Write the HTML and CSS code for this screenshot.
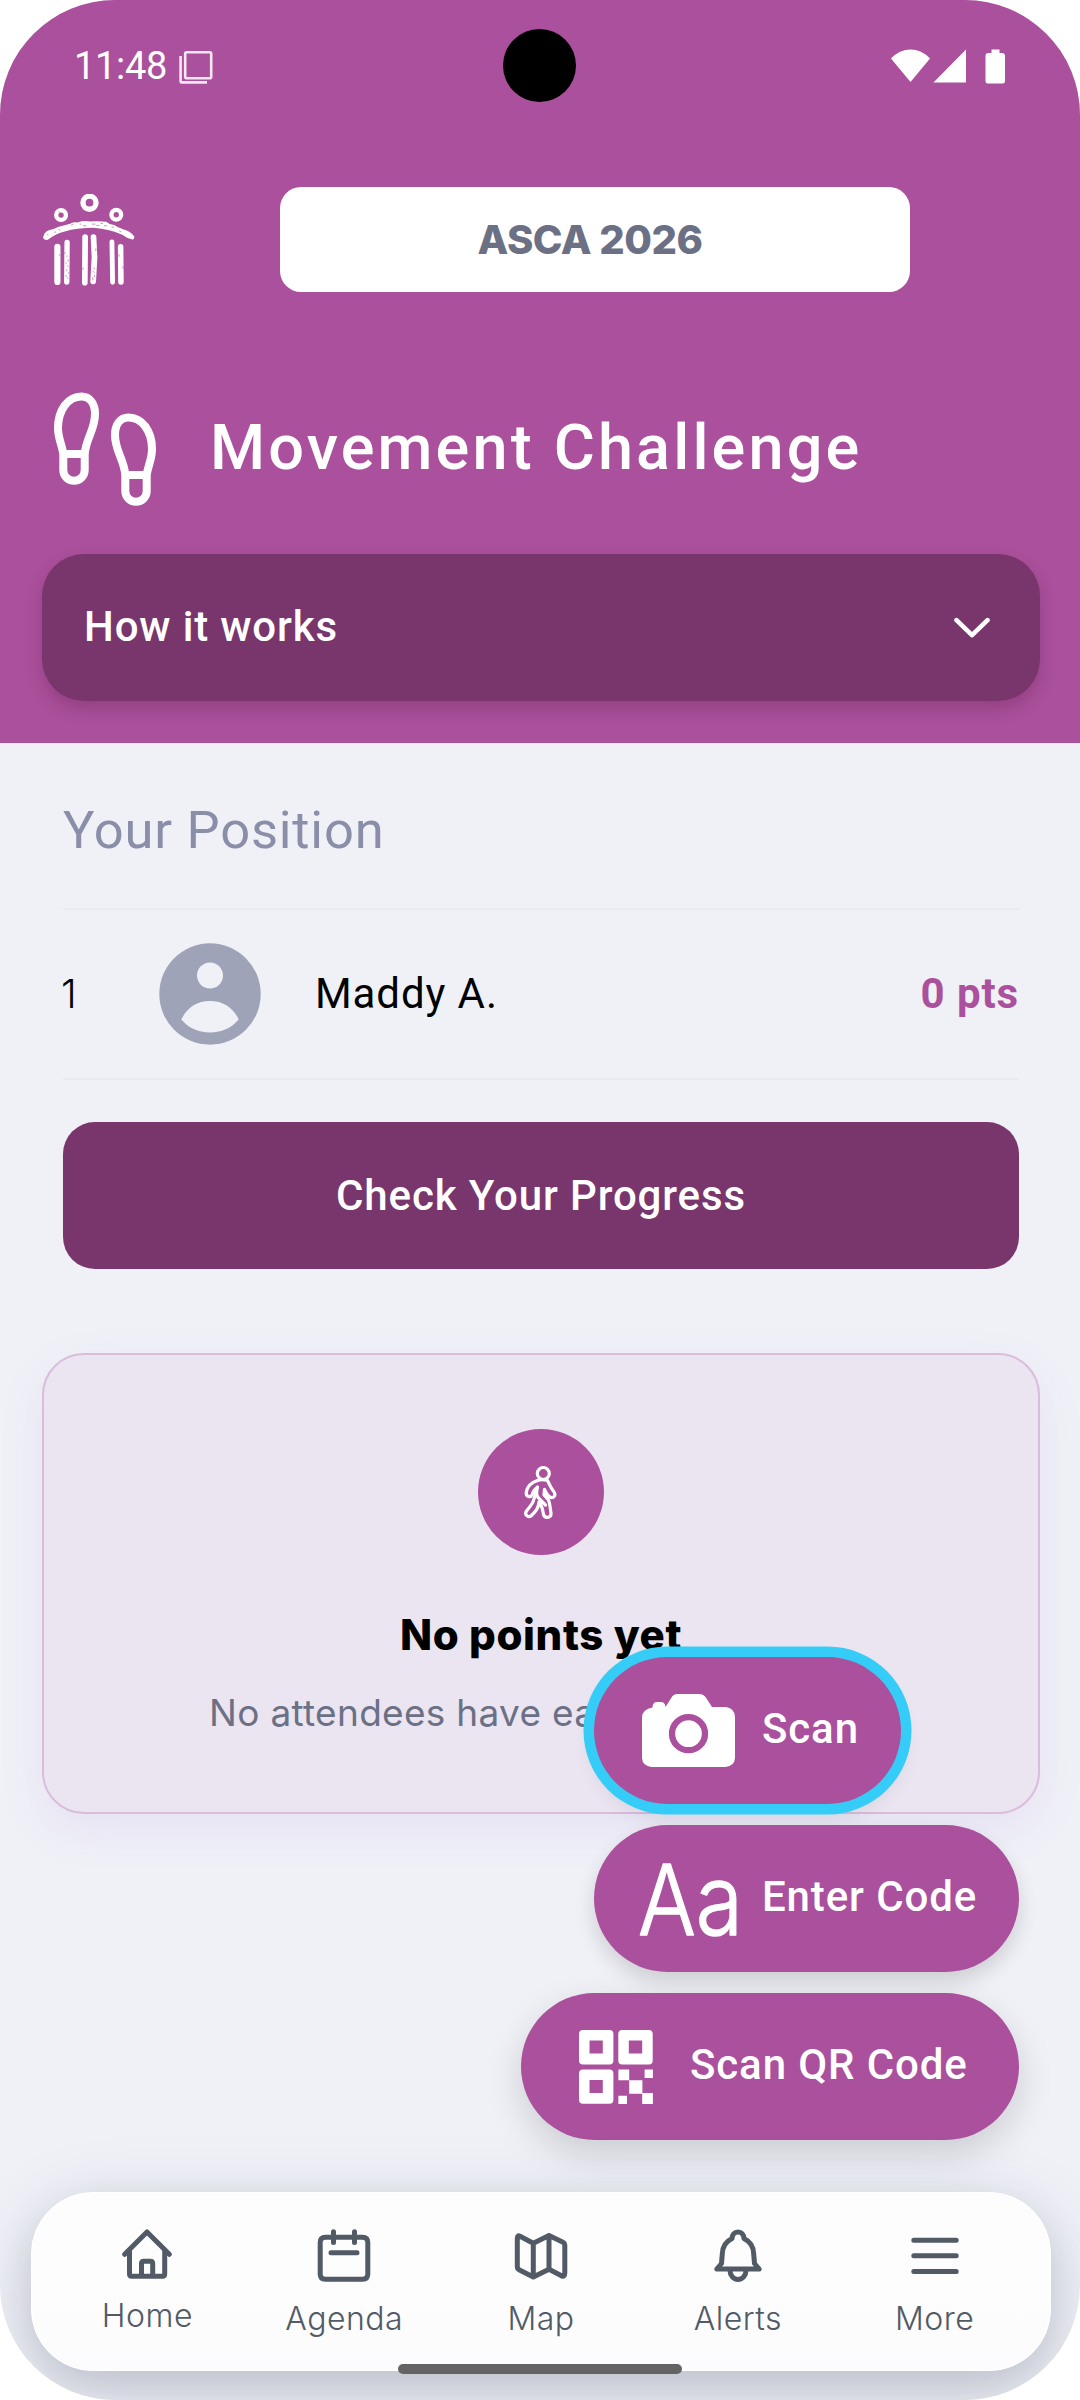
FILE: index.html
```html
<!DOCTYPE html>
<html lang="en">
<head>
<meta charset="utf-8">
<title>Movement Challenge</title>
<link rel="stylesheet" href="styles.css">
</head>
<body>
<div class="screen">
  <header class="header">
    <div class="status">
      <span class="status-time">11:48</span>
      <svg class="status-notice" width="34" height="34" viewBox="0 0 34 34" fill="none" stroke="#f5e6f2" stroke-width="2.600"><rect x="6.2" y="2.2" width="26" height="26" rx="1.5"/><path d="M1.6 6V31.5Q1.6 32.4 2.5 32.4H28"/></svg>
      <svg class="status-icons" width="115" height="36" viewBox="0 0 115 36" fill="#fff"><path d="M0 10.5Q8.500 1.500 19.500 1.500T39 10.500L19.500 34Z"/><path d="M75 1.500V34.500H42.500Z"/><path d="M100.500 1.500H108.500V5H111Q114 5 114 8V33Q114 35.500 111.500 35.500H96.500Q94.500 35.500 94.500 33V8Q94.500 5 97 5H100.500Z"/></svg>
    </div>
    <div class="topbar">
      <svg class="logo" width="92" height="92" viewBox="39 41 275 275" fill="none" stroke="#fff" stroke-linecap="round">
        <circle cx="178" cy="67" r="19.500" stroke-width="16"/>
        <circle cx="93" cy="104" r="14.500" stroke-width="13"/>
        <circle cx="258" cy="103" r="14.500" stroke-width="13"/>
        <path fill="#fff" stroke="none" d="M39 172Q41 156 56 149Q72 147 86 139Q104 134 120 130Q126 124 142 126Q160 120 180 123Q206 121 228 124Q236 132 252 134Q262 142 280 147Q300 152 312 168Q312 178 306 177Q290 174 276 163Q240 146 190 142Q140 142 104 153Q76 160 58 175Q46 184 39 172Z"/>
        <path stroke-width="18.500" d="M82 199V304"/>
        <path stroke-width="16" d="M111 186L110 304"/>
        <path stroke-width="17" d="M165 170L164 306"/>
        <path stroke-width="17" d="M190 170L193 230L189 302"/>
        <path stroke-width="14.500" d="M245 184L247 305"/>
        <path stroke-width="16.500" d="M271 199L272 304"/>
        <g stroke="#ab509c" stroke-width="1.800"><path d="M74 155h3M86 147l4 3M124 134l4-2M150 131h2M160 136h8M186 131h9M200 135h6M212 129h5M222 136h7M245 140l5 1M268 152l4 2M52 163h2"/><path d="M105 216v3M111 226v2M114 238v4M108 246v2M112 255l3 3M110 268v3M115 276v2M108 284v4M113 292v2M197 205v5M192 262v4M188 272l4 3M193 284v4M188 290v8M159 262v4M266 222v5M278 258v6M88 222v2M87 94v2"/></g>
      </svg>
      <div class="event">ASCA 2026</div>
    </div>
    <div class="title-row">
      <svg width="102" height="114" viewBox="0 0 102 114" fill="none" stroke="#fff" stroke-width="8" stroke-linejoin="round"><g id="foot"><path d="M27.500 4.500C35.500 4.500 41 11 41 22C41 38 32 46 30.700 62V78A10.600 10.700 0 0 1 9.300 78V62C8 52 4 47 4 36C4 18 14 4.500 27.500 4.500Z"/><path d="M9.300 62H30.700"/></g><use href="#foot" transform="translate(102 21) scale(-1 1)"/></svg>
      <h1 class="title">Movement Challenge</h1>
    </div>
    <div class="how">
      <span>How it works</span>
      <svg width="36" height="22" viewBox="0 0 36 22" fill="none" stroke="#fff" stroke-width="4.600" stroke-linecap="round" stroke-linejoin="round"><path d="M2.500 3.200L18 18.200L33.500 3.200"/></svg>
    </div>
  </header>

  <main class="content">
    <section class="position">
      <h2 class="section-title">Your Position</h2>
      <div class="row">
        <span class="rank">1</span>
        <svg class="avatar" width="102" height="102" viewBox="0 0 102 102"><circle cx="51" cy="51" r="50.700" fill="#9fa3b8"/><circle cx="51" cy="32.500" r="13" fill="#f0f1f7"/><path fill="#f0f1f7" d="M22.300 76.500C28 64.500 38 58 51 58S74 64.500 79.700 76.500C73 84.500 63 89.500 51 89.500S29 84.500 22.300 76.500Z"/></svg>
        <span class="name">Maddy A.</span>
        <span class="points">0 pts</span>
      </div>
      <button class="progress">Check Your Progress</button>
    </section>

    <section class="card">
      <div class="badge">
        <svg width="36" height="54" viewBox="0 0 36 54" fill="none" stroke="#fff" stroke-width="3.200" stroke-linecap="round" stroke-linejoin="round"><circle cx="20.300" cy="8.500" r="6"/><path d="M14.500 15.500C8 17.500 4 22 3.200 27.500C3 32 7.500 33 9.300 29.500C10 26.500 12 24 14.500 22C13 28 13 31 17 34.500L22.500 40"/><path d="M14.500 15.500Q19 13.800 24.500 15.500C27 20 27.500 22.500 30 25.500C34 30 31 33 28 32.500C25 31.500 23 28 21.500 24.500L21 30L25.500 35C27.500 40 27 43 28 48C28.500 53.500 21.500 53.500 20.500 49.500C19.500 44 19 40 16 37C15.500 43 13 46 8.500 50.500C5 53.500 1 49.500 3.500 46C7 41 10 40 11.300 33L12.500 29"/></svg>
      </div>
      <h3 class="card-title">No points yet</h3>
      <p class="card-text">No attendees have earned points yet.</p>
    </section>
  </main>

  <div class="actions">
    <button class="action action-scan">
      <svg width="93" height="73" viewBox="0 0 93 73"><path fill="#fff" d="M35 0H57Q61 0 63.500 3L70 13H84Q93 14.500 93 23V64Q92.500 72 83.500 73H9.500Q.5 72 0 64V23Q.5 15.500 10.500 13.500Q10.500 8 15 8H19Q23 8 23.500 13L29.500 3.500Q31.500 .2 35 0Z"/><circle cx="46.500" cy="39.700" r="16.500" fill="none" stroke="#ab509c" stroke-width="6.300"/></svg>
      <span>Scan</span>
    </button>
    <button class="action action-enter">
      <svg class="aa" width="100" height="80" viewBox="0 0 100 80"><text x="-1" y="75.500" textLength="105" lengthAdjust="spacingAndGlyphs">Aa</text></svg>
      <span>Enter Code</span>
    </button>
    <button class="action action-qr">
      <svg width="74" height="74" viewBox="0 0 74 74" fill="#fff"><path fill-rule="evenodd" d="M4 0H30.400Q34.400 0 34.400 4V30.400Q34.400 34.400 30.400 34.400H4Q0 34.400 0 30.400V4Q0 0 4 0ZM10.500 10.500V23.500H23.800V10.500Z"/><path fill-rule="evenodd" d="M43.300 0H69.700Q73.700 0 73.700 4V30.400Q73.700 34.400 69.700 34.400H43.300Q39.300 34.400 39.300 30.400V4Q39.300 0 43.300 0ZM49.800 10.500V23.500H63.200V10.500Z"/><path fill-rule="evenodd" d="M4 39.400H30.400Q34.400 39.400 34.400 43.400V69.800Q34.400 73.800 30.400 73.800H4Q0 73.800 0 69.800V43.400Q0 39.400 4 39.400ZM10.500 50V63H23.800V50Z"/><path d="M39.400 39.400H50.200V50.200H63.400V63H73.900V73.900H63.200V63.800H50.200V50.200H39.400ZM65.600 39.400H73.900V48H65.600ZM39.400 65.700H48V73.900H39.400Z"/></svg>
      <span>Scan QR Code</span>
    </button>
  </div>

  <nav class="nav">
    <a class="nav-item"><svg width="50" height="51" viewBox="0 0 50 51"><path d="M2.700 25.300L25 3L47.300 25.300M7.500 21V45Q7.500 47.200 9.700 47.200H40.500Q42.700 47.200 42.700 45V21M19.500 47V34.500Q19.500 32.300 21.700 32.300H28.500Q30.700 32.300 30.700 34.500V47"/></svg><span>Home</span></a>
    <a class="nav-item"><svg width="54" height="54" viewBox="0 0 54 54"><path d="M8.500 8.200H45.500Q50.800 8.200 50.800 13.500V45Q50.800 50.300 45.500 50.300H8.500Q3.200 50.300 3.200 45V13.500Q3.200 8.200 8.500 8.200ZM16.500 2.800V13.500M37.500 2.800V13.500M14 23.700H40"/></svg><span>Agenda</span></a>
    <a class="nav-item"><svg width="54" height="54" viewBox="0 0 54 54"><path d="M6 7.200L19.300 14.300L35 6.500L48.500 13Q50.800 14 50.800 16.500V44Q50.800 48.500 47.500 46.700L35 40.200L19.300 48L5.500 41Q3.300 40 3.300 37.500V9.500Q3.300 5.800 6 7.200ZM19.300 14.300V48M35 6.500V40.200"/></svg><span>Map</span></a>
    <a class="nav-item"><svg width="50" height="54" viewBox="0 0 50 54"><path d="M3.800 40L8.500 34.500L9.300 25C9.300 17.500 13 12.500 19 9.500C19.300 5.500 21.500 3 25 3S30.700 5.500 31 9.500C37 12.500 40.700 17.500 40.700 25L41.500 34.500L46.200 40ZM17 41.500A8 9 0 0 0 33 41.500"/></svg><span>Alerts</span></a>
    <a class="nav-item"><svg width="50" height="54" viewBox="0 0 50 54"><path d="M3.800 11.200H46.200M3.800 26.800H46.200M3.800 42.500H46.200"/></svg><span>More</span></a>
  </nav>
  <div class="camera-hole"></div>
  <div class="home-indicator"></div>
</div>
</body>
</html>
```
FILE: styles.css
```css
* { box-sizing: border-box; margin: 0; padding: 0; }
body { background: #fff; font-family: Roboto, sans-serif; }
button { border: 0; font: inherit; color: inherit; }
svg { display: block; flex: none; }

.screen {
  position: relative;
  width: 1080px;
  height: 2400px;
  overflow: hidden;
  border-radius: 115px;
  background: #f0f1f7;
}

/* Header */
.header { height: 743px; background: #ab509c; color: #fff; padding: 0 40px 0 42px; }
.status { display: flex; align-items: center; height: 132px; padding: 0 34px 0 32px; }
.status-time { font-size: 38px; letter-spacing: -0.3px; }
.status-notice { margin: 2px 0 0 12px; }
.status-icons { margin-left: auto; }
.topbar { display: flex; align-items: center; height: 105px; margin-top: 55px; }
.event {
  width: 630px; height: 105px; margin-left: 145px; padding-right: 10px;
  border-radius: 21px; background: #fff; color: #6c7085;
  font: 800 40px/105px Inter, sans-serif; letter-spacing: -0.5px; text-align: center;
}
.topbar .logo { margin: 1px 0 0 1px; }
.title-row { display: flex; align-items: center; height: 114px; margin-top: 100px; padding-left: 12px; gap: 54px; }
.title { font-size: 63px; font-weight: 500; line-height: 76px; letter-spacing: 3.15px; margin-top: -3px; }
.how {
  display: flex; align-items: center; justify-content: space-between;
  height: 147px; margin-top: 48px; padding: 0 50px 0 42px;
  border-radius: 42px; background: #79366c;
  font-size: 42px; font-weight: 500; letter-spacing: 0.85px;
  box-shadow: 0 8px 16px rgba(80, 20, 60, 0.25);
}
.how span { margin-top: -3px; }

/* Position */
.content { padding: 0 40px 0 42px; }
.position { padding: 57px 21px 0; }
.section-title { font-size: 52.5px; font-weight: 400; line-height: 60px; letter-spacing: 0.8px; color: #8a8ea8; }
.row {
  display: flex; align-items: center; height: 172px; margin-top: 48px;
  border-top: 2px solid #e9e9f4; border-bottom: 2px solid #e9e9f4;
  font-size: 42px; color: #000;
}
.rank { width: 98px; margin-left: -2px; font: 300 40px/48px Inter, sans-serif; }
.name { margin: -2px 0 0 54px; letter-spacing: 0.9px; }
.points { margin: -2px 0 0 auto; font-weight: 700; letter-spacing: 0.9px; color: #ab509c; }
.progress {
  display: block; width: 956px; height: 147px; margin-top: 42px;
  border-radius: 32px; background: #79366c; color: #fff;
  font-size: 42px; font-weight: 500; letter-spacing: 0.88px;
}

/* Empty state */
.card {
  display: flex; flex-direction: column; align-items: center;
  height: 461px; margin-top: 84px; padding-top: 74px;
  border: 2px solid #dbbcdb; border-radius: 42px; background: #eae5f0;
  box-shadow: 0 16px 48px rgba(130, 80, 210, 0.09);
}
.badge { display: flex; align-items: center; justify-content: center; width: 126px; height: 126px; border-radius: 50%; background: #ab509c; }
.card-title { margin-top: 55px; font: 800 42px/50px Inter, sans-serif; letter-spacing: 0.6px; color: #000; }
.card-text { margin-top: 31px; font: 400 37px/44px Inter, sans-serif; letter-spacing: 0.3px; color: #6c7085; }

/* Floating actions */
.actions {
  position: absolute; right: 61px; top: 1657px;
  display: flex; flex-direction: column; align-items: flex-end; gap: 21px;
}
.action {
  display: flex; align-items: center; height: 147px;
  border-radius: 74px; background: #ab509c; color: #fff;
  font-size: 42px; font-weight: 500; letter-spacing: 0.88px; white-space: nowrap;
  box-shadow: 0 10px 20px rgba(0, 0, 0, 0.14);
}
.action span { margin-top: -4px; }
.action-scan { width: 307px; margin-right: 118px; padding-left: 48px; gap: 27px; box-shadow: 0 0 0 10.5px #35cdf7, 0 12px 22px rgba(0, 0, 0, 0.1); }
.action-enter { width: 425px; padding-left: 45px; gap: 23px; }
.action-qr { width: 498px; padding-left: 58px; gap: 37px; box-shadow: 0 14px 36px rgba(0, 0, 0, 0.15); }
.aa { overflow: visible; font: 300 98px Inter, sans-serif; letter-spacing: 0; fill: #fff; stroke: #fff; stroke-width: 1.5px; stroke-linejoin: round; }

/* Bottom navigation */
.nav {
  position: absolute; left: 31px; top: 2192px; width: 1020px; height: 179px;
  display: flex; padding: 36px 17px 0;
  border-radius: 62px; border: 1px solid #fff;
  background: linear-gradient(#fdfdfd, #fcfcfe);
  box-shadow: 0 21px 84px rgba(31, 38, 90, 0.14), 0 16px 40px rgba(31, 50, 50, 0.14);
}
.nav-item { flex: 1; display: flex; flex-direction: column; align-items: center; gap: 16px; color: #525a66; font: 300 32px/40px Inter, sans-serif; letter-spacing: 0.5px; }
.nav-item svg { fill: none; stroke: #525a66; stroke-width: 5px; stroke-linecap: round; stroke-linejoin: round; }

/* Device overlays */
.camera-hole { position: absolute; left: 503px; top: 29px; width: 73px; height: 73px; border-radius: 50%; background: #000; }
.home-indicator { position: absolute; left: 398px; top: 2364px; width: 284px; height: 10px; border-radius: 5px; background: #646464; }
```
